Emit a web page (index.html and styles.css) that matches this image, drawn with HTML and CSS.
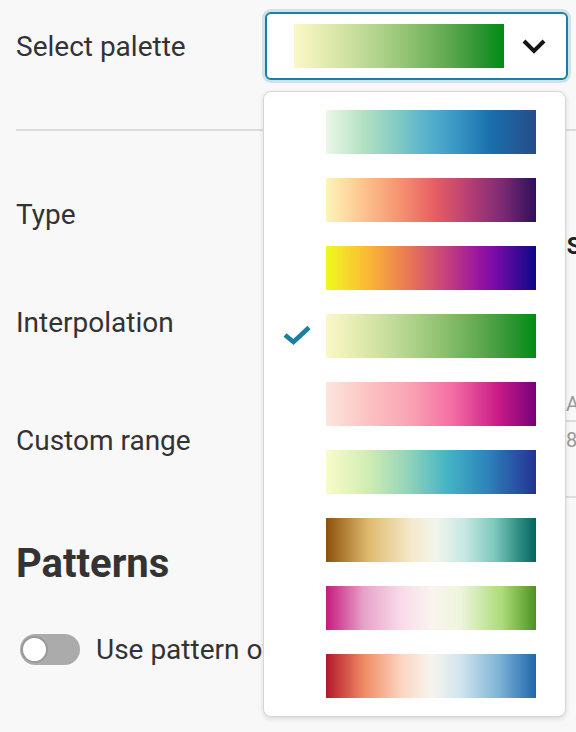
FILE: index.html
```html
<!DOCTYPE html>
<html lang="en">
<head>
    <meta charset="UTF-8">
    <meta name="viewport" content="width=device-width, initial-scale=1.0">
    <title>Palette settings</title>
    <link rel="stylesheet" href="styles.css">
</head>
<body>

    <div class="settings">

        <!-- Palette picker -->
        <div class="field palette-field">
            <label class="field-label">Select palette</label>
            <div class="palette-select">
                <button type="button" class="select-box">
                    <span class="swatch ylgn"></span>
                    <svg class="chevron" width="24" height="15" viewBox="0 0 24 15">
                        <polyline points="2,2 12,12 22,2" fill="none" stroke="#151515" stroke-width="4"/>
                    </svg>
                </button>

                <ul class="palette-menu">
                    <li class="palette-option"><span class="check"></span><span class="swatch gnbu"></span></li>
                    <li class="palette-option"><span class="check"></span><span class="swatch sunset"></span></li>
                    <li class="palette-option"><span class="check"></span><span class="swatch plasma"></span></li>
                    <li class="palette-option selected">
                        <span class="check">
                            <svg width="28" height="22" viewBox="0 0 28 22">
                                <polyline points="2,10 10.5,17 26,2.5" fill="none" stroke="#1d7fa0" stroke-width="4.6"/>
                            </svg>
                        </span>
                        <span class="swatch ylgn"></span>
                    </li>
                    <li class="palette-option"><span class="check"></span><span class="swatch rdpu"></span></li>
                    <li class="palette-option"><span class="check"></span><span class="swatch ylgnbu"></span></li>
                    <li class="palette-option"><span class="check"></span><span class="swatch brbg"></span></li>
                    <li class="palette-option"><span class="check"></span><span class="swatch piyg"></span></li>
                    <li class="palette-option"><span class="check"></span><span class="swatch rdbu"></span></li>
                </ul>
            </div>
        </div>

        <hr class="divider">

        <div class="field type-field">
            <label class="field-label">Type</label>
            <div class="type-options">
                <span class="type-option">DISCRETE</span>
                <span class="type-option active">CONTINUOUS</span>
            </div>
        </div>

        <div class="field">
            <label class="field-label">Interpolation</label>
            <div class="field-control"></div>
        </div>

        <div class="field range-field">
            <label class="field-label">Custom range</label>
            <div class="range-inputs">
                <div class="range-input">Auto</div>
                <div class="range-input tall">8</div>
            </div>
        </div>

        <h2 class="section-title">Patterns</h2>

        <div class="toggle-row">
            <span class="toggle"><span class="knob"></span></span>
            <span class="toggle-label">Use pattern overlay</span>
        </div>

    </div>

</body>
</html>
```

FILE: styles.css
```css
body {
    font-family: 'Roboto', 'Liberation Sans', sans-serif;
    margin: 0;
    padding: 0;
    background-color: #f8f8f8;
    color: #333;
    overflow: hidden;
    height: 732px;
}

.settings {
    padding: 12px 0 0 16px;
}

.field {
    display: flex;
    align-items: center;
    height: 108px;
}

.field-label {
    flex: 0 0 248px;
    font-size: 28px;
    color: #333;
}

/* Palette select */
.palette-field {
    height: 68px;
}

.palette-select {
    position: relative;
    margin-left: 1px;
}

.select-box {
    display: flex;
    align-items: center;
    box-sizing: border-box;
    width: 303px;
    height: 68px;
    padding: 0 0 0 27px;
    background-color: #fff;
    border: 2px solid #1d7fa0;
    border-radius: 6px;
    box-shadow: 0 0 0 3px #cfe2ea;
    cursor: pointer;
}

.chevron {
    margin-left: 18px;
}

.swatch {
    display: block;
    width: 210px;
    height: 44px;
}

.palette-menu {
    position: absolute;
    top: 79px;
    left: -2px;
    box-sizing: border-box;
    width: 303px;
    margin: 0;
    padding: 18px 0;
    list-style: none;
    display: flex;
    flex-direction: column;
    gap: 24px;
    background-color: #fff;
    border: 1px solid #d6d6d6;
    border-radius: 8px;
    box-shadow: 0 2px 5px rgba(0, 0, 0, 0.12);
    z-index: 10;
}

.palette-option {
    display: flex;
    align-items: center;
}

.check {
    flex: 0 0 62px;
    display: flex;
    justify-content: center;
    padding-left: 4px;
    box-sizing: border-box;
}

.check svg {
    display: block;
}

/* Palettes */
.gnbu { background: linear-gradient(to right, #ecf7e8, #b3e1c2 18%, #88cdc3 32%, #57b2cc 48%, #3a97c5 62%, #1a70ad 78%, #274b8a); }
.sunset { background: linear-gradient(to right, #fdf5b9, #fcc38d 18%, #f5906f 36%, #e65e63 52%, #b73f74 68%, #7c2a73 84%, #2f0f5c); }
.plasma { background: linear-gradient(to right, #f0f921, #fbb834 20%, #ea7b53 38%, #cc4778 55%, #9b179e 72%, #7a0ba8 80%, #0d0887); }
.ylgn { background: linear-gradient(to right, #fbf8c8, #d9e7a8 20%, #b5d58f 38%, #8cc06f 56%, #5ea84e 74%, #2f9534 88%, #008d13); }
.rdpu { background: linear-gradient(to right, #fde6df, #fbc3c2 20%, #f8a3b4 40%, #f56ea3 60%, #c91b86 82%, #78007a); }
.ylgnbu { background: linear-gradient(to right, #fafcc8, #d0edb3 20%, #97d5b9 38%, #44b4c5 58%, #2e86bc 76%, #243293); }
.brbg { background: linear-gradient(to right, #8c510a, #deb96d 20%, #f4e8c8 40%, #f2f5ec 52%, #c6e8e2 66%, #7fc9bd 80%, #359187 91%, #01665e); }
.piyg { background: linear-gradient(to right, #c51b7d, #e8a2c9 18%, #f9dbea 36%, #f9f4ef 50%, #eef5dc 64%, #acdb78 84%, #4d9221); }
.rdbu { background: linear-gradient(to right, #b2182b, #ef8b63 18%, #fbd5c1 36%, #f7f5ee 50%, #d2e5ee 64%, #7fb5d6 82%, #2166ac); }

.divider {
    margin: 49px 0 0;
    border: none;
    border-top: 2px solid #dcdcdc;
}

.type-field {
    margin-top: 29px;
}

/* Controls mostly covered by the open menu */
.type-options {
    display: flex;
    justify-content: flex-end;
    gap: 40px;
    flex: 0 0 317px;
    padding-top: 64px;
    white-space: nowrap;
    font-size: 23px;
    font-weight: 700;
    color: #222;
}

.range-field {
    height: 128px;
}

.range-inputs {
    display: flex;
    flex-direction: column;
    flex: 1;
    align-self: flex-start;
    padding-top: 10px;
}

.range-input {
    box-sizing: border-box;
    height: 36px;
    line-height: 36px;
    padding-left: 302px;
    font-size: 20px;
    color: #999;
    border-bottom: 2px solid #ddd;
}

.range-input.tall {
    height: 76px;
}

.section-title {
    margin: 36px 0 0;
    font-size: 40px;
    font-weight: 700;
    color: #333;
}

.toggle-row {
    display: flex;
    align-items: center;
    gap: 16px;
    margin-top: 46px;
    padding-left: 4px;
}

.toggle {
    position: relative;
    display: inline-block;
    width: 60px;
    height: 31px;
    border-radius: 16px;
    background-color: #ababab;
}

.knob {
    position: absolute;
    top: 2px;
    left: 1px;
    width: 23px;
    height: 23px;
    border: 2px solid #999;
    border-radius: 50%;
    background-color: #fff;
}

.toggle-label {
    font-size: 28px;
    white-space: nowrap;
}
```
